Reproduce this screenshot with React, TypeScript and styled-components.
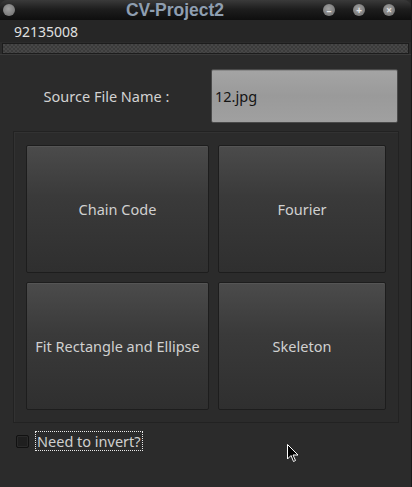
import styled, { createGlobalStyle } from "styled-components";

const GlobalStyle = createGlobalStyle`
  html, body {
    margin: 0;
    padding: 0;
    background: #2b2b2b;
  }
  body {
    font-family: "Noto Sans", "DejaVu Sans", sans-serif;
  }
`;

const Window = styled.div`
  position: relative;
  width: 412px;
  height: 487px;
  display: flex;
  flex-direction: column;
  background: #2b2b2b;
  overflow: hidden;
  border-right: 1px solid #1a1a1a;
  box-sizing: border-box;
`;

const TitleBar = styled.div`
  height: 20px;
  display: flex;
  align-items: center;
  padding: 0 16px 0 3px;
  background: linear-gradient(#3a3a3a 0%, #1e1e1e 45%, #0e0e0e 100%);
  border-radius: 7px 7px 0 0;
  flex-shrink: 0;
`;

const Title = styled.div`
  flex: 1;
  text-align: center;
  font-family: "Liberation Sans", Arial, sans-serif;
  font-weight: bold;
  font-size: 17.5px;
  line-height: 20px;
  color: #8e9eb0;
  padding-left: 30px;
`;

const Dot = styled.span<{ $tone?: string }>`
  width: 12px;
  height: 12px;
  border-radius: 50%;
  background: radial-gradient(circle at 45% 40%, #a0a0a0, #6a6a6a);
  display: grid;
  place-items: center;
  margin-left: ${(p) => (p.$tone === "ctl" ? "18px" : "0")};
  color: #e6e6e6;
  font-size: 10px;
  line-height: 1;
  font-weight: bold;
`;

const Controls = styled.div`
  display: flex;
  align-items: center;
`;

const MenuBar = styled.div`
  height: 22px;
  display: flex;
  align-items: center;
  padding-left: 14px;
  background: #262626;
  color: #e0e0e0;
  font-size: 14px;
  flex-shrink: 0;
`;

const Strip = styled.div`
  height: 9px;
  margin: 1px 2px 0 2px;
  border: 1px solid #1c1c1c;
  background-color: #474747;
  background-image: linear-gradient(45deg, #3b3b3b 25%, transparent 25%, transparent 75%, #3b3b3b 75%),
    linear-gradient(45deg, #3b3b3b 25%, transparent 25%, transparent 75%, #3b3b3b 75%);
  background-size: 4px 4px;
  background-position: 0 0, 2px 2px;
  flex-shrink: 0;
`;

const Body = styled.div`
  flex: 1;
  padding: 14px 13px 0 13px;
  border-top: 1px solid #3a3a3a;
  display: flex;
  flex-direction: column;
`;

const FileRow = styled.div`
  display: grid;
  grid-template-columns: 187px 187px;
  column-gap: 11px;
  align-items: center;
  height: 54px;
`;

const Label = styled.div`
  text-align: center;
  color: #d2d2d2;
  font-size: 14.5px;
`;

const Input = styled.div`
  height: 54px;
  box-sizing: border-box;
  border: 1px solid #4a4a4a;
  border-radius: 2px;
  background: linear-gradient(#a4a4a4, #9a9a9a 50%, #a0a0a0);
  box-shadow: inset 0 1px 0 #8a8a8a;
  display: flex;
  align-items: center;
  padding-left: 3px;
  color: #141414;
  font-size: 14.5px;
`;

const Group = styled.div`
  margin-top: 8px;
  width: 386px;
  height: 292px;
  box-sizing: border-box;
  border: 1px solid #222;
  box-shadow: inset 1px 1px 0 #323232;
  padding: 13px 12px 12px 12px;
  display: grid;
  grid-template-columns: 183px 168px;
  grid-template-rows: 128px 128px;
  gap: 9px;
`;

const Action = styled.button`
  box-sizing: border-box;
  border: 1px solid #1d1d1d;
  border-radius: 2px;
  background: linear-gradient(#4b4b4b, #3a3a3a 40%, #2f2f2f);
  box-shadow: inset 0 1px 0 #555;
  color: #d0d0d0;
  font-family: "Noto Sans", sans-serif;
  font-size: 14.5px;
  padding: 0;
  cursor: pointer;
`;

const CheckRow = styled.label`
  margin-top: 8px;
  margin-left: 3px;
  display: flex;
  align-items: center;
  gap: 6px;
`;

const Box = styled.span`
  width: 13px;
  height: 13px;
  box-sizing: border-box;
  border: 1px solid #111;
  border-radius: 2px;
  background: #1f1f1f;
  box-shadow: inset 0 0 0 1px #2a2a2a;
`;

const CheckText = styled.span`
  border: 1px dotted #e8e8e8;
  padding: 0 1px;
  color: #cfcfcf;
  font-size: 14.5px;
  line-height: 18px;
`;

const Pointer = styled.svg`
  position: absolute;
  left: 287px;
  top: 444px;
`;

export default function App() {
  return (
    <>
      <GlobalStyle />
      <Window>
        <TitleBar>
          <Dot />
          <Title>CV-Project2</Title>
          <Controls>
            <Dot $tone="ctl">–</Dot>
            <Dot $tone="ctl">+</Dot>
            <Dot $tone="ctl">×</Dot>
          </Controls>
        </TitleBar>
        <MenuBar>92135008</MenuBar>
        <Strip />
        <Body>
          <FileRow>
            <Label>Source File Name :</Label>
            <Input>12.jpg</Input>
          </FileRow>
          <Group>
            <Action>Chain Code</Action>
            <Action>Fourier</Action>
            <Action>Fit Rectangle and Ellipse</Action>
            <Action>Skeleton</Action>
          </Group>
          <CheckRow>
            <Box />
            <CheckText>Need to invert?</CheckText>
          </CheckRow>
        </Body>
        <Pointer width="12" height="20" viewBox="0 0 12 20">
          <path d="M0.5 0.5 L0.5 15 L4 11.5 L6.5 17.5 L8.5 16.5 L6 11 L11 11 Z" fill="#000" stroke="#fff" strokeWidth="1" />
        </Pointer>
      </Window>
    </>
  );
}
